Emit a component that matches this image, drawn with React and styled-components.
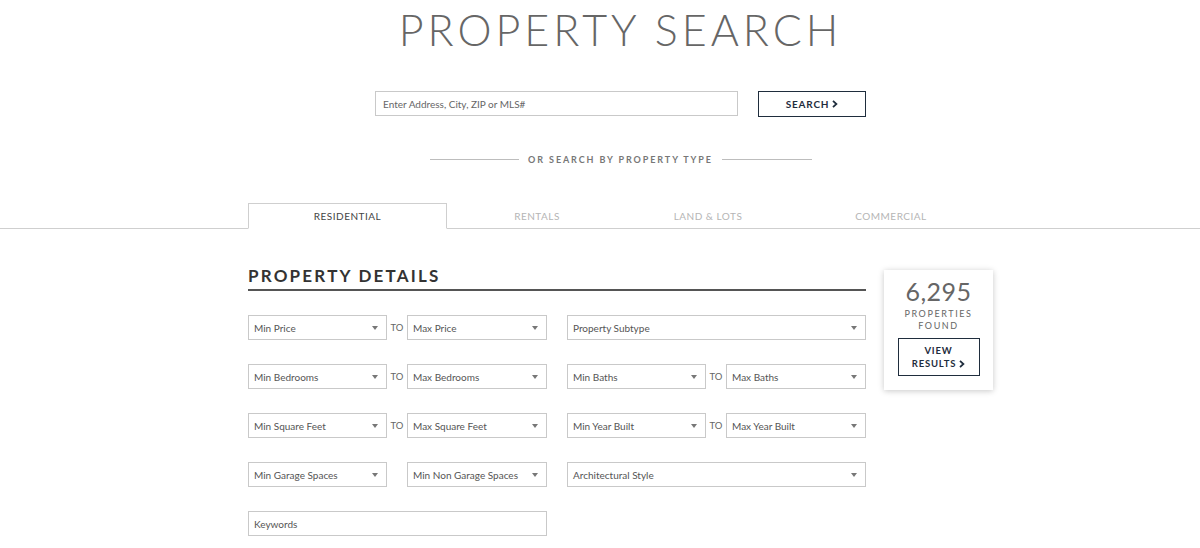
import React from 'react'
import styled, { createGlobalStyle } from 'styled-components'

const GlobalStyle = createGlobalStyle`
  body {
    margin: 0;
    background: #fff;
    font-family: 'Lato', 'Liberation Sans', sans-serif;
    color: #555;
  }
`

const NAVY = '#1f2d3d'

/* 整頁 */
const Page = styled.div`
  width: 1200px;
  height: 548px;
  overflow: hidden;
  background: #fff;
`

/* 置中的內容區塊 (中心點約 620px) */
const Container = styled.div`
  width: 745px;
  margin: 0 0 0 248px;
`

const Title = styled.h1`
  margin: 0;
  padding-top: 6px;
  text-align: center;
  font-size: 43px;
  line-height: 48px;
  font-weight: 300;
  letter-spacing: 4px;
  color: #666;
`

const SearchRow = styled.div`
  margin-top: 37px;
  display: flex;
  justify-content: center;
  gap: 20px;
`

const SearchInput = styled.div`
  box-sizing: border-box;
  width: 363px;
  height: 25px;
  border: 1px solid #c9c9c9;
  padding-left: 7px;
  display: flex;
  align-items: center;
  font-size: 10px;
  color: #666;
`

const OutlineButton = styled.div`
  box-sizing: border-box;
  width: ${(p) => p.$w}px;
  height: ${(p) => p.$h}px;
  border: 1.5px solid ${NAVY};
  color: ${NAVY};
  font-size: ${(p) => p.$fs || 10}px;
  font-weight: 700;
  letter-spacing: 0.8px;
  line-height: 13px;
  display: flex;
  align-items: center;
  justify-content: center;
  text-align: center;
`

const Chevron = () => (
  <svg width="6" height="8" viewBox="0 0 6 8" style={{ marginLeft: 3, verticalAlign: '-0.5px' }}>
    <path d="M1 0.8 L4.4 4 L1 7.2" fill="none" stroke={NAVY} strokeWidth="1.8" />
  </svg>
)

const Divider = styled.div`
  margin: 37px auto 0;
  width: 382px;
  display: flex;
  align-items: center;
  gap: 9px;

  &::before,
  &::after {
    content: '';
    flex: 1;
    height: 1px;
    background: #bdbdbd;
  }
`

const DividerText = styled.span`
  font-size: 9px;
  font-weight: 700;
  letter-spacing: 1.9px;
  color: #777;
`

/* 分類 tab */
const TabBar = styled.div`
  margin-top: 38px;
  border-bottom: 1px solid #cfcfcf;
`

const Tabs = styled.div`
  display: flex;
  margin-left: 248px;
`

const Tab = styled.div`
  box-sizing: border-box;
  width: ${(p) => p.$w}px;
  height: 26px;
  margin-bottom: -1px;
  display: flex;
  align-items: center;
  justify-content: center;
  font-size: 10px;
  letter-spacing: 0.5px;
  color: ${(p) => (p.$active ? '#444' : '#b5b5b5')};
  background: ${(p) => (p.$active ? '#fff' : 'transparent')};
  border: 1px solid ${(p) => (p.$active ? '#cfcfcf' : 'transparent')};
  border-bottom-color: ${(p) => (p.$active ? '#fff' : 'transparent')};
`

const Body = styled.div`
  display: flex;
  align-items: flex-start;
  gap: 18px;
  margin-top: 35px;
`

const Details = styled.div`
  width: 618px;
`

const DetailsTitle = styled.h2`
  margin: 0;
  font-size: 17px;
  line-height: 24px;
  font-weight: 700;
  letter-spacing: 2.2px;
  color: #333;
  padding-bottom: 1px;
  border-bottom: 2px solid #555;
`

const Grid = styled.div`
  margin-top: 24px;
  display: grid;
  grid-template-columns: 299px 299px;
  column-gap: 20px;
  row-gap: 24px;
`

const Pair = styled.div`
  display: flex;
  align-items: center;
  justify-content: space-between;
`

const To = styled.span`
  width: 20px;
  text-align: center;
  font-size: 9.5px;
  color: #666;
`

const Field = styled.div`
  box-sizing: border-box;
  width: ${(p) => (p.$w ? `${p.$w}px` : '100%')};
  height: 25px;
  border: 1px solid #c9c9c9;
  padding: 0 8px 0 5px;
  display: flex;
  align-items: center;
  justify-content: space-between;
  font-size: 10px;
  color: #555;
`

const Caret = styled.span`
  width: 0;
  height: 0;
  border-left: 3px solid transparent;
  border-right: 3px solid transparent;
  border-top: 4px solid #777;
`

/* 右側結果卡片 */
const ResultCard = styled.div`
  box-sizing: border-box;
  width: 109px;
  height: 120px;
  margin-top: 6px;
  padding-top: 7px;
  background: #fff;
  box-shadow: 0 1px 6px rgba(0, 0, 0, 0.22);
  display: flex;
  flex-direction: column;
  align-items: center;
`

const Count = styled.div`
  font-size: 25px;
  line-height: 28px;
  color: #666;
  letter-spacing: 0.5px;
`

const Found = styled.div`
  margin: 3px 0 6px;
  font-size: 9px;
  line-height: 12px;
  letter-spacing: 1.6px;
  text-align: center;
  color: #666;
`

const Select = ({ label, w }) => (
  <Field $w={w}>
    <span>{label}</span>
    <Caret />
  </Field>
)

const Range = ({ min, max, to = true }) => (
  <Pair>
    <Select label={min} w={139} />
    {to ? <To>TO</To> : <span />}
    <Select label={max} w={140} />
  </Pair>
)

export default function App() {
  const tabs = [
    { label: 'RESIDENTIAL', w: 199, active: true },
    { label: 'RENTALS', w: 180 },
    { label: 'LAND & LOTS', w: 162 },
    { label: 'COMMERCIAL', w: 204 },
  ]

  return (
    <Page>
      <GlobalStyle />
      <Container>
        <Title>PROPERTY SEARCH</Title>

        <SearchRow>
          <SearchInput>Enter Address, City, ZIP or MLS#</SearchInput>
          <OutlineButton $w={108} $h={26}>
            SEARCH
            <Chevron />
          </OutlineButton>
        </SearchRow>

        <Divider>
          <DividerText>OR SEARCH BY PROPERTY TYPE</DividerText>
        </Divider>
      </Container>

      <TabBar>
        <Tabs>
          {tabs.map((t) => (
            <Tab key={t.label} $w={t.w} $active={t.active}>
              {t.label}
            </Tab>
          ))}
        </Tabs>
      </TabBar>

      <Container>
        <Body>
          <Details>
            <DetailsTitle>PROPERTY DETAILS</DetailsTitle>
            <Grid>
              <Range min="Min Price" max="Max Price" />
              <Select label="Property Subtype" />
              <Range min="Min Bedrooms" max="Max Bedrooms" />
              <Range min="Min Baths" max="Max Baths" />
              <Range min="Min Square Feet" max="Max Square Feet" />
              <Range min="Min Year Built" max="Max Year Built" />
              <Range min="Min Garage Spaces" max="Min Non Garage Spaces" to={false} />
              <Select label="Architectural Style" />
              <Field>
                <span>Keywords</span>
              </Field>
            </Grid>
          </Details>

          <ResultCard>
            <Count>6,295</Count>
            <Found>
              PROPERTIES
              <br />
              FOUND
            </Found>
            <OutlineButton $w={82} $h={38} $fs={9.5}>
              <span>
                VIEW
                <br />
                RESULTS
                <Chevron />
              </span>
            </OutlineButton>
          </ResultCard>
        </Body>
      </Container>
    </Page>
  )
}
